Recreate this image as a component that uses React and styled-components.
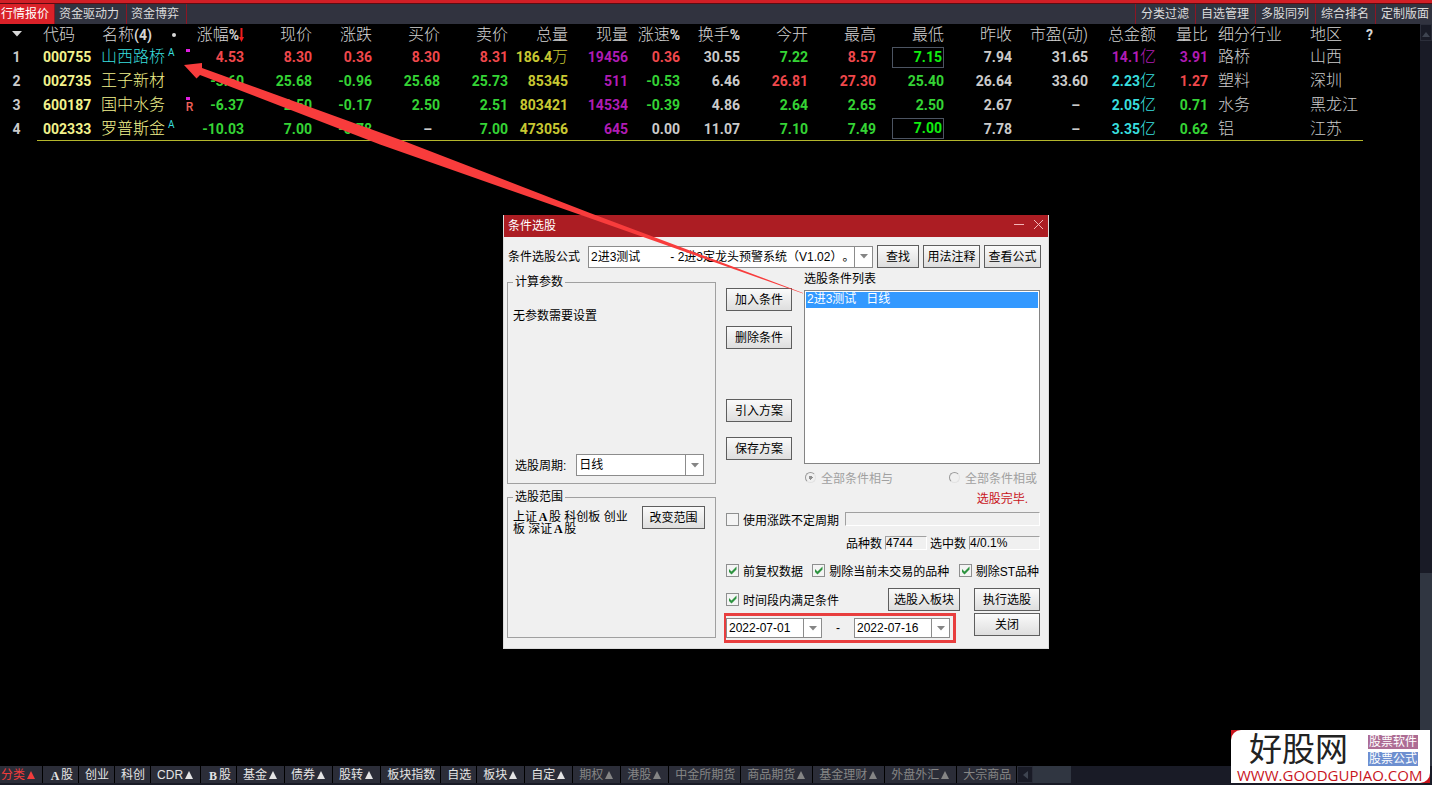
import React, { useState } from 'react'
import styled, { createGlobalStyle, css } from 'styled-components'

const COLORS = {
  red: '#f0484c',
  green: '#35d435',
  bright: '#10ee10',
  grey: '#cbcbcb',
  yellow: '#c8c832',
  purple: '#b01cb4',
  cyan: '#38dede',
  code: '#f2f28c',
}

const topTabs = ['行情报价', '资金驱动力', '资金博弈']
const topLinks = ['分类过滤', '自选管理', '多股同列', '综合排名', '定制版面']

const columns = [
  { label: '现价', width: 68 },
  { label: '涨跌', width: 60 },
  { label: '买价', width: 68 },
  { label: '卖价', width: 68 },
  { label: '总量', width: 60 },
  { label: '现量', width: 60 },
  { label: '涨速%', width: 52 },
  { label: '换手%', width: 60 },
  { label: '今开', width: 68 },
  { label: '最高', width: 68 },
  { label: '最低', width: 68 },
  { label: '昨收', width: 68 },
  { label: '市盈(动)', width: 76 },
  { label: '总金额', width: 68 },
  { label: '量比', width: 52 },
]

// each value is [text, colour, boxed]
const stocks = [
  {
    code: '000755', name: '山西路桥', nameColor: 'cyan', mark: 'A', dot: true,
    industry: '路桥', area: '山西',
    values: [['4.53', 'red'], ['8.30', 'red'], ['0.36', 'red'], ['8.30', 'red'], ['8.31', 'red'], ['186.4万', 'yellow'], ['19456', 'purple'], ['0.36', 'red'], ['30.55', 'grey'], ['7.22', 'green'], ['8.57', 'red'], ['7.15', 'bright', true], ['7.94', 'grey'], ['31.65', 'grey'], ['14.1亿', 'purple'], ['3.91', 'purple']],
  },
  {
    code: '002735', name: '王子新材', nameColor: 'code',
    industry: '塑料', area: '深圳',
    values: [['-3.60', 'green'], ['25.68', 'green'], ['-0.96', 'green'], ['25.68', 'green'], ['25.73', 'green'], ['85345', 'yellow'], ['511', 'purple'], ['-0.53', 'green'], ['6.46', 'grey'], ['26.81', 'red'], ['27.30', 'red'], ['25.40', 'green'], ['26.64', 'grey'], ['33.60', 'grey'], ['2.23亿', 'cyan'], ['1.27', 'red']],
  },
  {
    code: '600187', name: '国中水务', nameColor: 'code', dot: true, tag: 'R',
    industry: '水务', area: '黑龙江',
    values: [['-6.37', 'green'], ['2.50', 'green'], ['-0.17', 'green'], ['2.50', 'green'], ['2.51', 'green'], ['803421', 'yellow'], ['14534', 'purple'], ['-0.39', 'green'], ['4.86', 'grey'], ['2.64', 'green'], ['2.65', 'green'], ['2.50', 'green'], ['2.67', 'grey'], ['–', 'grey'], ['2.05亿', 'cyan'], ['0.71', 'green']],
  },
  {
    code: '002333', name: '罗普斯金', nameColor: 'code', mark: 'A',
    industry: '铝', area: '江苏',
    values: [['-10.03', 'green'], ['7.00', 'green'], ['-0.78', 'green'], ['–', 'grey'], ['7.00', 'green'], ['473056', 'yellow'], ['645', 'purple'], ['0.00', 'grey'], ['11.07', 'grey'], ['7.10', 'green'], ['7.49', 'green'], ['7.00', 'bright', true], ['7.78', 'grey'], ['–', 'grey'], ['3.35亿', 'cyan'], ['0.62', 'green']],
  },
]

const markets = [
  { label: '分类', up: true, tone: 'active' },
  { wide: 'A', label: '股' },
  { label: '创业' },
  { label: '科创' },
  { label: 'CDR', up: true },
  { wide: 'B', label: '股' },
  { label: '基金', up: true },
  { label: '债券', up: true },
  { label: '股转', up: true },
  { label: '板块指数' },
  { label: '自选' },
  { label: '板块', up: true },
  { label: '自定', up: true },
  { label: '期权', up: true, tone: 'dim' },
  { label: '港股', up: true, tone: 'dim' },
  { label: '中金所期货', tone: 'dim' },
  { label: '商品期货', up: true, tone: 'dim' },
  { label: '基金理财', up: true, tone: 'dim' },
  { label: '外盘外汇', up: true, tone: 'dim' },
  { label: '大宗商品', tone: 'dim' },
]

const Combo = ({ id, label, options }) => (
  <ComboBox>
    <select id={id} aria-label={label}>
      {options.map((o) => <option key={o}>{o}</option>)}
    </select>
    <ComboArrow><svg width="8" height="5" viewBox="0 0 8 5"><path d="M0 0h8L4 4.5z" fill="#858585" /></svg></ComboArrow>
  </ComboBox>
)

const Check = ({ children, defaultChecked }) => {
  const [checked, setChecked] = useState(!!defaultChecked)
  return (
    <CheckLabel>
      <CheckInput type="checkbox" checked={checked} onChange={(e) => setChecked(e.target.checked)} />
      {checked && <Tick viewBox="0 0 13 13"><path d="M3 5v3l2.500 2.500 5-5V2.500l-5 5z" fill="#2e9440" /></Tick>}
      <span>{children}</span>
    </CheckLabel>
  )
}

// large amounts end in 万 / 亿, which is set as Chinese text
const Amount = ({ text }) => {
  const unit = text.slice(-1)
  if (unit !== '万' && unit !== '亿') return text
  return <>{text.slice(0, -1)}<Han>{unit}</Han></>
}

const QuoteTable = () => (
  <Table>
    <colgroup>
      <col style={{ width: 37 }} />
      <col style={{ width: 58 }} />
      <col style={{ width: 85 }} />
      <col style={{ width: 16 }} />
      <col style={{ width: 48 }} />
      {columns.map((c) => <col key={c.label} style={{ width: c.width }} />)}
      <col style={{ width: 92 }} />
      <col style={{ width: 63 }} />
      <col />
    </colgroup>
    <thead>
      <tr>
        <Th $align="center" $end={4}><svg width="10" height="9" viewBox="0 0 10 9"><path d="M0 0h10L5 5.500z" fill="#d8d8d8" /></svg></Th>
        <Th $align="left">代码</Th>
        <Th $align="left" $pad={7}>
          <NameHead>名称<b>(4)</b><svg width="4" height="4"><circle cx="2" cy="2" r="2" fill="#d8d8d8" /></svg></NameHead>
        </Th>
        <Th />
        <Th>
          <SortHead>
            涨幅<b>%</b>
            <svg width="5" height="14" viewBox="0 0 5 14"><path d="M1.500 0h2v9H5l-2.500 5L0 9h1.500z" fill="#f01c1c" /></svg>
          </SortHead>
        </Th>
        {columns.map((c) => {
          const pct = c.label.endsWith('%')
          return <Th key={c.label}>{pct ? c.label.slice(0, -1) : c.label}{pct && <b>%</b>}</Th>
        })}
        <Th $align="left" $pad={10}>细分行业</Th>
        <Th $align="left" $pad={10}>地区</Th>
        <Th $align="left" $pad={3}><b>?</b></Th>
      </tr>
    </thead>
    <tbody>
      {stocks.map((s, i) => (
        <tr key={s.code}>
          <Td $align="center" $end={4}>{i + 1}</Td>
          <Td $align="left" $color="code">{s.code}</Td>
          <Td $align="left" $color={s.nameColor}>
            <NameCell><Han>{s.name}</Han>{s.mark && <Mark>{s.mark}</Mark>}</NameCell>
          </Td>
          <Td $align="center">
            <Flags>
              {s.dot && <i />}
              {s.tag && <span>{s.tag}</span>}
            </Flags>
          </Td>
          {s.values.map(([text, color, boxed], n) => (
            <Td key={n} $color={color} $end={text === '–' ? 8 : 0}>
              {boxed ? <LowBox>{text}</LowBox> : <Amount text={text} />}
            </Td>
          ))}
          <Td $align="left" $pad={10}><Han>{s.industry}</Han></Td>
          <Td $align="left" $pad={10}><Han>{s.area}</Han></Td>
          <Td />
        </tr>
      ))}
    </tbody>
  </Table>
)

const FilterDialog = () => (
  <Dialog role="dialog" aria-label="条件选股">
    <TitleBar>
      <span>条件选股</span>
      <WinButton aria-label="最小化"><svg width="11" height="11"><path d="M0 5.500h10" stroke="#f3b5b7" /></svg></WinButton>
      <WinButton aria-label="关闭窗口"><svg width="11" height="11"><path d="M1 1l9 9M10 1l-9 9" stroke="#f3b5b7" /></svg></WinButton>
    </TitleBar>

    <FormulaRow>
      <label htmlFor="formula">条件选股公式</label>
      <Combo id="formula" options={['2进3测试\u00a0\u00a0\u00a0\u00a0\u00a0\u00a0\u00a0\u00a0\u00a0- 2进3定龙头预警系统（V1.02）。']} />
      <Button $width={42}>查找</Button>
      <Button $width={57}>用法注释</Button>
      <Button $width={57}>查看公式</Button>
    </FormulaRow>

    <Columns>
      <LeftPane>
        <Group $grow={215}>
          <legend>计算参数</legend>
          <p>无参数需要设置</p>
          <PeriodRow>
            <label htmlFor="period">选股周期:</label>
            <Combo id="period" options={['日线']} />
          </PeriodRow>
        </Group>
        <Group $grow={150}>
          <legend>选股范围</legend>
          <ScopeRow>
            <div>上证<Wide>A</Wide>股 科创板 创业板 深证<Wide>A</Wide>股</div>
            <Button $width={63}>改变范围</Button>
          </ScopeRow>
        </Group>
      </LeftPane>

      <RightPane>
        <ListArea>
          <ButtonStack>
            <Button $width={66}>加入条件</Button>
            <Button $width={66}>删除条件</Button>
            <Spacer />
            <Button $width={66}>引入方案</Button>
            <Button $width={66}>保存方案</Button>
          </ButtonStack>
          <ListColumn>
            <span id="cond-title">选股条件列表</span>
            <CondList aria-labelledby="cond-title">
              <li>2进3测试&nbsp;&nbsp; 日线</li>
            </CondList>
          </ListColumn>
        </ListArea>
        <RadioRow>
          <label><input type="radio" name="mode" disabled defaultChecked />全部条件相与</label>
          <label><input type="radio" name="mode" disabled />全部条件相或</label>
        </RadioRow>
        <Status>选股完毕.</Status>
        <Line $height={22}>
          <Check>使用涨跌不定周期</Check>
          <Sunken aria-label="不定周期" readOnly />
        </Line>
        <Line $height={25} $end>
          <label htmlFor="total">品种数</label>
          <Sunken id="total" $width={42} readOnly value="4744" />
          <label htmlFor="picked">选中数</label>
          <Sunken id="picked" $width={71} readOnly value="4/0.1%" />
        </Line>
        <Line $height={30} $between>
          <Check defaultChecked>前复权数据</Check>
          <Check defaultChecked>剔除当前未交易的品种</Check>
          <Check defaultChecked>剔除ST品种</Check>
        </Line>
        <Line $height={28}>
          <Check defaultChecked>时间段内满足条件</Check>
          <Spacer />
          <Button $width={72}>选股入板块</Button>
          <Button $width={66}>执行选股</Button>
        </Line>
        <DateLine>
          <DateRange>
            <Combo label="开始日期" options={['2022-07-01']} />
            <span>-</span>
            <Combo label="结束日期" options={['2022-07-16']} />
          </DateRange>
          <Button $width={66}>关闭</Button>
        </DateLine>
      </RightPane>
    </Columns>
  </Dialog>
)

const App = () => (
  <>
    <GlobalStyle />
    <Screen>
      <TopStrip />
      <TopNav>
        {topTabs.map((t, i) => <TopTab key={t} $active={i === 0}>{t}</TopTab>)}
        <Spacer />
        {topLinks.map((t) => <TopLink key={t}>{t}</TopLink>)}
      </TopNav>
      <Body>
        <QuoteTable />
        <ScrollTrack>
          <ScrollUp aria-label="向上滚动"><svg width="8" height="5"><path d="M0 5h8L4 0z" fill="#3e4450" /></svg></ScrollUp>
          <ScrollThumb />
        </ScrollTrack>
      </Body>
      <MarketBar>
        {markets.map((m) => (
          <MarketTab key={(m.wide || '') + m.label} $tone={m.tone}>
            {m.wide && <Wide>{m.wide}</Wide>}
            {m.label}
            {m.up && <svg width="12" height="9" viewBox="0 0 12 9"><path d="M2 8h8L6 0z" fill="currentColor" /></svg>}
          </MarketTab>
        ))}
        <HScroll>
          <button aria-label="向左滚动"><svg width="5" height="8"><path d="M5 0v8L0 4z" fill="#3e4450" /></svg></button>
          <i />
        </HScroll>
      </MarketBar>

      <FilterDialog />

      <ArrowOverlay width="640" height="240" viewBox="180 58 640 240">
        <path d="M184 65L202 63 202 68 405 141.500 590 213 803 293 803 293.500 588 217.500 380 144.500 200 75 196.500 78.500z" fill="#f83c3c" />
      </ArrowOverlay>

      <Logo href="#">
        <LogoPlate>
          <LogoMain>
            <strong>好股网</strong>
            <div>
              <LogoTag $bg="#ad6d94">股票软件</LogoTag>
              <LogoTag $bg="#6d8fd0">股票公式</LogoTag>
            </div>
          </LogoMain>
          <LogoUrl>WWW.GOODGUPIAO.COM</LogoUrl>
        </LogoPlate>
      </Logo>
    </Screen>
  </>
)

const GlobalStyle = createGlobalStyle`
*{
    box-sizing: border-box;
}
body{
    margin: 0;
    background: #000;
    overflow: hidden;
    font-family: "Liberation Sans", "Noto Sans CJK SC", sans-serif;
    font-size: 12px;
    text-spacing-trim: space-all;
}
button, input, select{
    font: inherit;
    margin: 0;
    padding: 0;
}
`

const Screen = styled.div`
position: relative;
display: flex;
flex-direction: column;
min-height: 100vh;
background: #000;
`

const TopStrip = styled.div`
height: 4px;
background: #d11f26;
border-bottom: 1px solid #5c0c12;
`

const TopNav = styled.nav`
display: flex;
height: 20px;
background: #31333f;
`

const TopTab = styled.button`
border: 0;
border-right: 1px solid #8c1624;
padding: 1px 7px 0 4px;
line-height: 19px;
white-space: nowrap;
color: #dcdcdc;
background: none;
${({ $active }) => $active && css`
  padding: 1px 5px 0 1px;
  color: #fff;
  background: #da2128;
`}
`

const TopLink = styled.button`
border: 0;
border-left: 1px solid #8c1624;
padding: 1px 6px 0 5px;
line-height: 19px;
white-space: nowrap;
color: #dcdcdc;
background: none;
&:last-child{
    padding-right: 3px;
}
`

const Spacer = styled.div`
flex: 1;
`

const Body = styled.main`
display: flex;
flex: 1;
align-items: flex-start;
`

const Table = styled.table`
flex: 1;
width: 100%;
table-layout: fixed;
border-collapse: separate;
border-spacing: 0;
font-family: Roboto, "Noto Sans CJK SC", sans-serif;
`

const cell = css`
padding: 0;
padding-left: ${({ $pad, $align }) => $pad ?? ($align === 'left' ? 6 : 0)}px;
padding-right: ${({ $end }) => $end || 0}px;
text-align: ${({ $align }) => $align || 'right'};
white-space: nowrap;
`

const Th = styled.th`
${cell}
height: 21px;
font-size: 16px;
font-weight: 300;
line-height: 20px;
color: #d4d4d4;
b{
    font-size: 14px;
    font-weight: 700;
}
`

const Td = styled.td`
${cell}
height: 24px;
font-size: 14px;
font-weight: 700;
line-height: 22px;
color: ${({ $color }) => COLORS[$color || 'grey']};
tr:last-child &{
    border-bottom: 1px solid #b4b62c;
}
tr:last-child &:first-child, tr:last-child &:last-child{
    border-bottom: 0;
}
`

const Han = styled.span`
font-size: 16px;
font-weight: 300;
line-height: 22px;
`

const NameHead = styled.span`
display: flex;
align-items: center;
svg{
    margin-left: auto;
    margin-right: 4px;
}
`

const SortHead = styled.span`
display: flex;
align-items: center;
justify-content: flex-end;
svg{
    flex: none;
}
`

const NameCell = styled.span`
display: flex;
align-items: flex-start;
gap: 3px;
`

const Mark = styled.span`
font-size: 10px;
font-weight: 400;
line-height: 14px;
color: ${COLORS.cyan};
`

const Flags = styled.div`
display: flex;
flex-direction: column;
align-items: center;
height: 20px;
i{
    width: 4px;
    height: 3px;
    margin-top: 2px;
    background: #e01ee0;
}
span{
    padding-left: 3px;
    font-size: 12px;
    font-weight: 500;
    line-height: 14px;
    color: #f06058;
}
`

const LowBox = styled.div`
width: 52px;
height: 21px;
margin-left: auto;
padding-right: 1px;
border: 1px solid #4c5462;
line-height: 19px;
`

const ScrollTrack = styled.div`
display: flex;
flex-direction: column;
align-self: stretch;
width: 12px;
background: #191b26;
`

const ScrollUp = styled.button`
height: 17px;
border: 1px solid #2b2e3a;
background: #191b26;
line-height: 8px;
`

const ScrollThumb = styled.div`
margin-top: auto;
height: 26%;
background: #303641;
`

const MarketBar = styled.nav`
display: flex;
align-items: stretch;
height: 19px;
padding-bottom: 2px;
background: #191b26;
`

const MarketTab = styled.button`
display: flex;
align-items: center;
border: 0;
border-right: 1px solid #000;
padding: 2px 5px 0 6px;
white-space: nowrap;
line-height: 15px;
background: #2b2d38;
color: ${({ $tone }) => ({ active: '#f03c3c', dim: '#858585' }[$tone] || '#e4e4e4')};
&:first-child{
    padding-left: 1px;
}
`

const Wide = styled.b`
display: inline-block;
width: 12px;
font-family: "Liberation Serif", serif;
line-height: 12px;
text-align: center;
`

const HScroll = styled.div`
display: flex;
button{
    width: 16px;
    border: 1px solid #2b2e3a;
    background: #191b26;
    line-height: 8px;
}
i{
    width: 38px;
    background: #303641;
}
`

const Dialog = styled.section`
position: absolute;
left: 503px;
top: 215px;
width: 546px;
padding-bottom: 5px;
border: 1px solid #dcdcdc;
border-top: 0;
background: #f0f0f0;
color: #000;
`

const TitleBar = styled.header`
display: flex;
align-items: center;
gap: 8px;
height: 22px;
padding: 0 4px 3px;
background: #ac1d23;
color: #fff;
span{
    flex: 1;
}
`

const WinButton = styled.button`
display: flex;
border: 0;
background: none;
`

const FormulaRow = styled.div`
display: flex;
align-items: center;
gap: 4px;
padding: 8px 7px 0 4px;
label{
    margin-right: 4px;
    padding-bottom: 3px;
}
`

const ComboBox = styled.div`
display: grid;
flex: 1;
min-width: 0;
height: 22px;
border: 1px solid #8c8c8c;
background: #fff;
select{
    grid-area: 1 / 1;
    width: 100%;
    min-width: 0;
    padding: 0 18px 0 2px;
    appearance: none;
    border: 0;
    background: none;
    color: #000;
}
`

const ComboArrow = styled.span`
grid-area: 1 / 1;
justify-self: end;
display: flex;
align-items: center;
justify-content: center;
width: 18px;
border-left: 1px solid #8c8c8c;
pointer-events: none;
`

const Button = styled.button`
flex: none;
width: ${({ $width }) => $width}px;
height: 23px;
padding-bottom: 2px;
border: 1px solid #5e5e5e;
background: linear-gradient(#fafafa, #dedede);
color: #000;
white-space: nowrap;
`

const Columns = styled.div`
display: flex;
gap: 8px;
padding: 5px 8px 0 3px;
`

const LeftPane = styled.div`
display: flex;
flex-direction: column;
gap: 4px;
width: 209px;
padding-bottom: 5px;
`

const Group = styled.fieldset`
display: flex;
flex-direction: column;
flex: ${({ $grow }) => $grow} 1 0;
min-width: 0;
margin: 0;
padding: 0 5px 7px;
border: 1px solid #a0a0a0;
legend{
    padding: 0 2px;
    line-height: 18px;
}
p{
    margin: 16px 0 0;
    line-height: 18px;
}
`

const PeriodRow = styled.div`
display: flex;
align-items: center;
gap: 10px;
margin-top: auto;
padding: 0 6px 0 2px;
label{
    padding-bottom: 2px;
}
`

const ScopeRow = styled.div`
display: flex;
gap: 4px;
padding-right: 5px;
div{
    flex: 1;
    padding-top: 5px;
    line-height: 12px;
}
`

const RightPane = styled.div`
flex: 1;
min-width: 0;
`

const ListArea = styled.div`
display: flex;
gap: 12px;
height: 191px;
padding-left: 2px;
`

const ButtonStack = styled.div`
display: flex;
flex-direction: column;
gap: 15px;
padding: 15px 0 4px;
`

const ListColumn = styled.div`
display: flex;
flex-direction: column;
flex: 1;
gap: 4px;
span{
    line-height: 13px;
}
`

const CondList = styled.ul`
flex: 1;
margin: 0;
padding: 1px;
border: 1px solid #848484;
background: #fff;
list-style: none;
li{
    padding: 0 0 2px 1px;
    line-height: 14px;
    background: #3399ff;
    color: #fff;
}
`

const RadioRow = styled.div`
display: flex;
justify-content: space-between;
height: 26px;
padding: 0 3px 0 81px;
color: #a0a0a0;
label{
    display: flex;
    align-items: center;
    gap: 5px;
}
input{
    appearance: none;
    width: 11px;
    height: 11px;
    border: 1px solid #9a9a9a;
    border-right-color: #e2e2e2;
    border-bottom-color: #e2e2e2;
    border-radius: 50%;
}
input:checked{
    background: radial-gradient(#909090 0 2px, transparent 2px);
}
`

const Status = styled.div`
padding-right: 12px;
text-align: right;
line-height: 18px;
color: #c81420;
`

const Line = styled.div`
display: flex;
align-items: center;
justify-content: ${({ $end, $between }) => ($end ? 'flex-end' : $between ? 'space-between' : 'flex-start')};
gap: ${({ $end }) => ($end ? 3 : 6)}px;
height: ${({ $height }) => $height}px;
padding-left: 2px;
padding-right: ${({ $between }) => ($between ? 1 : 0)}px;
button + button{
    margin-left: 8px;
}
`

const CheckLabel = styled.label`
display: grid;
grid-template-columns: 13px auto;
align-items: center;
column-gap: 4px;
white-space: nowrap;
span{
    grid-area: 1 / 2;
}
`

const CheckInput = styled.input`
grid-area: 1 / 1;
appearance: none;
width: 13px;
height: 13px;
border: 1px solid #8e8f8f;
background: #f4f4f4;
`

const Tick = styled.svg`
grid-area: 1 / 1;
width: 13px;
height: 13px;
pointer-events: none;
`

const Sunken = styled.input`
flex: ${({ $width }) => ($width ? 'none' : 1)};
width: ${({ $width }) => ($width ? `${$width}px` : 'auto')};
min-width: 0;
height: 14px;
border: 1px solid;
border-color: #a0a0a0 #fff #fff #a0a0a0;
background: #f0f0f0;
`

const DateLine = styled.div`
display: flex;
align-items: flex-start;
justify-content: space-between;
`

const DateRange = styled.div`
display: flex;
align-items: center;
width: 232px;
height: 30px;
padding-right: 3px;
border: 3px solid #e83e3e;
border-left-width: 2px;
> span{
    width: 32px;
    text-align: center;
}
${ComboBox}{
    height: 20px;
}
`

const ArrowOverlay = styled.svg`
position: absolute;
left: 180px;
top: 58px;
pointer-events: none;
`

const Logo = styled.a`
position: absolute;
right: 2px;
bottom: 2px;
width: 199px;
background: #c8141c;
text-decoration: none;
`

const LogoPlate = styled.div`
height: 53px;
padding: 2px 6px 0;
border-radius: 10px 0 10px 0;
background: #fff;
`

const LogoMain = styled.div`
display: flex;
justify-content: space-between;
height: 34px;
padding: 0 6px 0 12px;
strong{
    font-size: 33px;
    font-weight: 400;
    line-height: 36px;
    color: #222;
}
div{
    display: flex;
    flex-direction: column;
    gap: 3px;
    padding-top: 3px;
}
`

const LogoTag = styled.span`
padding: 0 1px;
line-height: 14px;
color: #fff;
background: ${({ $bg }) => $bg};
`

const LogoUrl = styled.div`
font-family: "Open Sans", sans-serif;
font-size: 15px;
line-height: 18px;
color: #c8141c;
`

export default App
